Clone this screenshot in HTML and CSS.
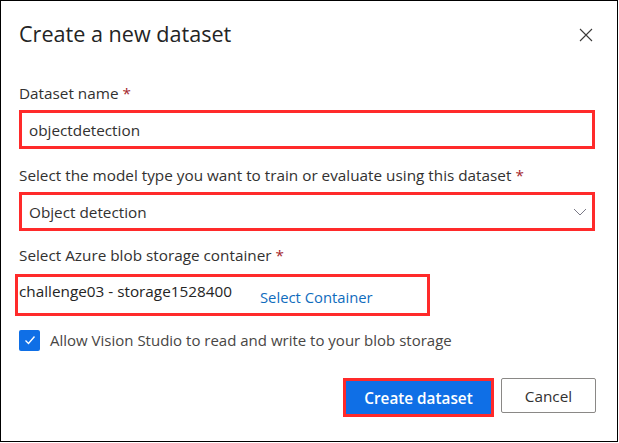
FILE: index.html
```html
<!DOCTYPE html>
<html>
<head>
<meta charset="utf-8">
<link rel="stylesheet" href="styles.css">
</head>
<body>
<div class="dialog">
  <div class="header">
    <h1 class="title">Create a new dataset</h1>
    <button class="close" aria-label="Close">
      <svg width="14" height="14" viewBox="0 0 14 14"><path d="M1 1 L13 13 M13 1 L1 13" stroke="#3b3a39" stroke-width="1.1" fill="none"/></svg>
    </button>
  </div>

  <div class="label label-first">Dataset name <span class="req">*</span></div>
  <div class="field"><span class="value">objectdetection</span></div>

  <div class="label">Select the model type you want to train or evaluate using this dataset <span class="req">*</span></div>
  <div class="field select">
    <span class="value">Object detection</span>
    <svg class="chev" width="14" height="8" viewBox="0 0 14 8"><path d="M1 1 L7 7 L13 1" stroke="#6b6a78" stroke-width="0.9" fill="none"/></svg>
  </div>

  <div class="label label-third">Select Azure blob storage container <span class="req">*</span></div>
  <div class="container-box">
    <span class="container-name">challenge03 - storage1528400</span>
    <span class="link">Select Container</span>
  </div>

  <div class="check-row">
    <span class="checkbox">
      <svg width="14" height="14" viewBox="0 0 14 14"><path d="M2.5 7.5 L5.5 10.5 L11.5 3.5" stroke="#fff" stroke-width="1.4" fill="none"/></svg>
    </span>
    <span class="check-text">Allow Vision Studio to read and write to your blob storage</span>
  </div>

  <div class="actions">
    <button class="btn primary">Create dataset</button>
    <button class="btn secondary">Cancel</button>
  </div>
</div>
</body>
</html>
```
FILE: styles.css
```css
* { box-sizing: border-box; }
html, body { margin: 0; padding: 0; background: #fff; }
body { font-family: "Open Sans", "Noto Sans", sans-serif; color: #323130; }

.dialog {
  width: 618px;
  height: 442px;
  border: 1px solid #000;
  padding: 19px 22px 0 18px;
  display: flex;
  flex-direction: column;
}

.header {
  display: flex;
  justify-content: space-between;
  align-items: center;
  height: 28px;
}
.title {
  margin: 0;
  font-size: 21.6px;
  line-height: 28px;
  font-weight: 400;
  color: #242424;
}
.close {
  border: 0;
  background: none;
  padding: 0;
  width: 14px;
  height: 14px;
  margin-right: 2px;
  margin-top: 2px;
  display: flex;
}

.label {
  font-size: 15.3px;
  line-height: 20px;
  color: #323130;
  margin-top: 16px;
}
.label-first { margin-top: 35px; }
.label-third { margin-top: 14px; }
.req { color: #a4262c; }

.field {
  margin-top: 7px;
  height: 39px;
  width: 576px;
  border: 3px solid #ff2a2a;
  display: flex;
  align-items: center;
  padding: 0 7px;
  font-size: 15.3px;
  color: #323130;
}
.select { justify-content: space-between; padding-right: 5px; }
.chev { display: block; }

.container-box {
  margin-top: 9px;
  margin-left: -4px;
  width: 415px;
  height: 42px;
  border: 3px solid #ff2a2a;
  display: flex;
  align-items: flex-start;
  padding: 4px 0 0 1px;
  font-size: 15.3px;
}
.container-name { color: #242424; line-height: 20px; }
.link { color: #0f6cbd; margin-left: 28px; margin-top: 6px; line-height: 20px; font-size: 14.8px; }

.check-row {
  margin-top: 13px;
  display: flex;
  align-items: center;
  height: 22px;
}
.checkbox {
  width: 21px;
  height: 21px;
  border-radius: 2px;
  background: #0f6fe6;
  display: flex;
  align-items: center;
  justify-content: center;
}
.check-text {
  margin-left: 10px;
  font-size: 15px;
  color: #484644;
}

.actions {
  margin-top: 27px;
  display: flex;
  justify-content: flex-end;
  align-items: flex-start;
  gap: 7px;
  margin-right: -1px;
}
.btn {
  font-family: "Open Sans", "Noto Sans", sans-serif;
  font-size: 15.3px;
  height: 35px;
  border-radius: 2px;
  cursor: pointer;
}
.primary {
  width: 151px;
  height: 39px;
  background: #0f6fe6;
  color: #fff;
  font-weight: 600;
  border: 3px solid #ff2a2a;
  border-radius: 0;
}
.secondary {
  width: 95px;
  background: #fff;
  color: #323130;
  border: 1px solid #8a8886;
  font-weight: 400;
}
```
